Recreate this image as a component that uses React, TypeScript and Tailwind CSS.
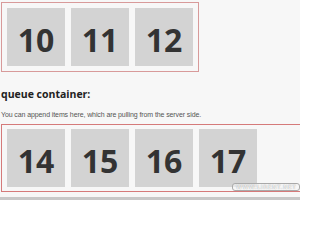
import React from "react";

const Tile = ({ n }: { n: number }) => (
  <div className="w-[58px] h-[58px] bg-[#d3d3d3] flex items-center justify-center pt-[5px] text-[32px] font-bold text-[#333] leading-none [font-family:'Open_Sans',sans-serif]">
    {n}
  </div>
);

export default function App() {
  return (
    <div className="w-[300px] h-[200px] overflow-hidden bg-[#f7f7f7] relative">
      <div className="pt-[2px] pl-[1px]">
        <div className="inline-flex gap-[6px] p-[5px] border border-[#d89a9a]">
          <Tile n={10} />
          <Tile n={11} />
          <Tile n={12} />
        </div>
      </div>
      <h2 className="mt-[14px] pl-[1px] text-[10.5px] font-bold text-[#222] leading-[16px] [font-family:'Open_Sans',sans-serif]">
        queue container:
      </h2>
      <p className="mt-[7px] pl-[1px] text-[7px] tracking-[-0.1px] text-[#555] leading-[12px] [font-family:'Liberation_Sans',Arial,sans-serif]">
        You can append items here, which are pulling from the server side.
      </p>
      <div className="mt-[3px] ml-[1px] w-[330px] flex gap-[6px] p-[4px] pl-[5px] border border-[#d57a7a]">
        <Tile n={14} />
        <Tile n={15} />
        <Tile n={16} />
        <Tile n={17} />
      </div>
      <div className="absolute left-[232px] top-[183px] px-[3px] h-[8px] rounded-[3px] border border-[#aaa] bg-[#f7f7f7]/60 flex items-center text-[6px] leading-none tracking-[0.5px] text-white [text-shadow:0_0_1px_#777] [font-family:'DejaVu_Sans',sans-serif]">
        WWW.LIRENT.NET
      </div>
      <div className="absolute left-0 right-0 bottom-0 h-[3px] bg-[#c8c8c8]" />
    </div>
  );
}
